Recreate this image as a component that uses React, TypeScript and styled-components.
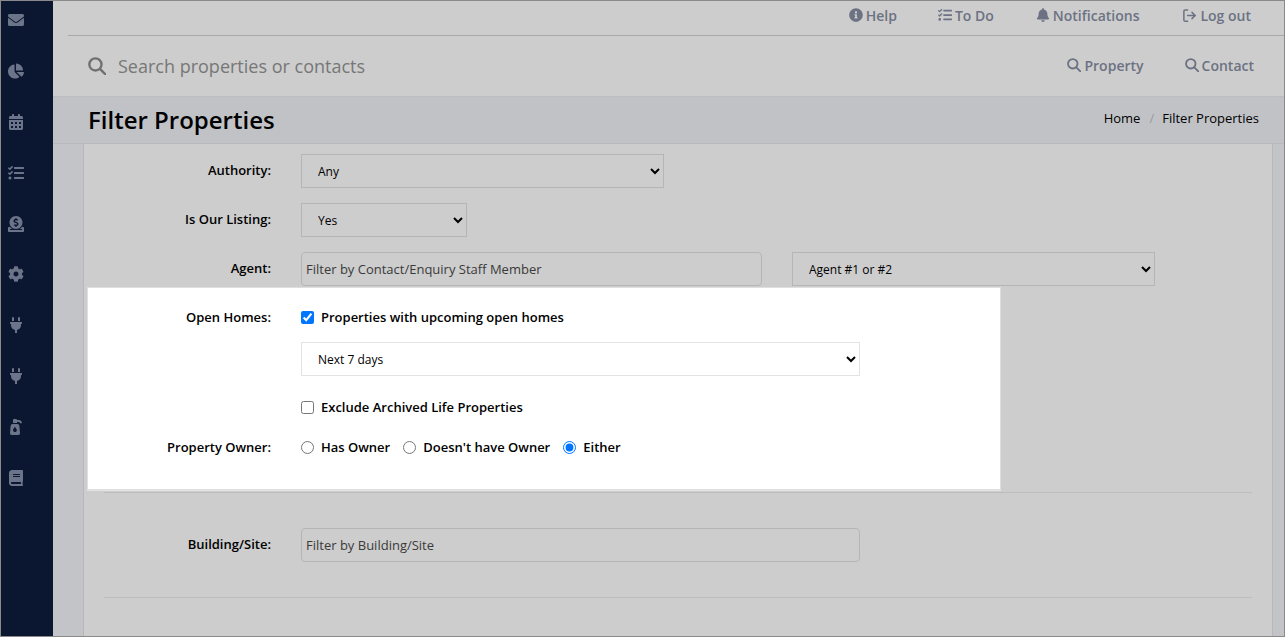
import React from 'react';
import styled, { createGlobalStyle } from 'styled-components';
import {
  FaBell,
  FaBook,
  FaCalendarAlt,
  FaChartPie,
  FaCog,
  FaDonate,
  FaEnvelope,
  FaInfoCircle,
  FaPlug,
  FaPumpSoap,
  FaTasks,
} from 'react-icons/fa';
import { LogOut } from 'lucide-react';

const GlobalStyle = createGlobalStyle`
  html, body {
    margin: 0;
    height: 100%;
    overflow: hidden;
    background: #cdcdcd;
  }
  * { box-sizing: border-box; }
`;

const Frame = styled.div`
  display: flex;
  width: 1285px;
  height: 637px;
  overflow: hidden;
  border: 1px solid #8a8a8a;
  font-family: "Open Sans", sans-serif;
  color: #000;
`;

const Sidebar = styled.nav`
  flex: 0 0 52px;
  display: flex;
  flex-direction: column;
  padding-top: 11px;
  background: #0b1730;
  color: #6b7488;
`;

const SideItem = styled.div`
  height: 50.9px;
  padding-left: 7px;
  font-size: 16px;
  line-height: 18px;
`;

const Main = styled.div`
  flex: 1;
  min-width: 0;
  display: flex;
  flex-direction: column;
`;

const TopBar = styled.div`
  height: 35px;
  margin-left: 15px;
  display: flex;
  justify-content: flex-end;
  align-items: center;
  gap: 42px;
  padding: 0 33px 6px 0;
  border-bottom: 1px solid #a8a8a8;
  background: #cdcdcd;
`;

const TopLink = styled.a<{ $nudge?: number }>`
  display: flex;
  align-items: center;
  gap: 3px;
  margin-left: ${p => p.$nudge ?? 0}px;
  font-size: 14px;
  font-weight: 600;
  color: #6c7283;
`;

const SearchRow = styled.div`
  height: 61px;
  display: flex;
  align-items: center;
  padding: 0 30px 0 35px;
  background: #cdcdcd;
  border-bottom: 1px solid #bdbdbd;
`;

const BigSearch = styled.span`
  display: flex;
  color: #707070;
`;

const SearchHint = styled.span`
  flex: 1;
  margin-left: 12px;
  font-size: 18px;
  color: #777;
`;

const SearchLink = styled.a`
  display: flex;
  align-items: center;
  gap: 3px;
  margin-left: 41px;
  padding-bottom: 2px;
  font-size: 14px;
  font-weight: 600;
  color: #6c7283;
`;

const TitleBand = styled.div`
  height: 47px;
  display: flex;
  align-items: center;
  justify-content: space-between;
  padding: 0 25px 2px 35px;
  background: #c1c2c6;
  border-bottom: 1px solid #b8b9bc;
`;

const PageTitle = styled.h1`
  margin: 0;
  font-size: 24px;
  font-weight: 600;
`;

const Crumbs = styled.div`
  display: flex;
  gap: 8px;
  padding-bottom: 2px;
  font-size: 13px;
`;

const CrumbDivider = styled.span`
  margin-left: 1px;
  color: #9a9a9a;
`;

const Body = styled.div`
  flex: 1;
  min-height: 0;
  padding: 0 11px 0 30px;
  background: #c3c4c8;
`;

const Card = styled.div`
  height: 100%;
  padding-top: 10px;
  background: #cdcdcd;
  border-left: 1px solid #b8b8b8;
  border-right: 1px solid #b8b8b8;
`;

const Row = styled.div<{ $height: number; $pad?: number }>`
  display: flex;
  height: ${p => p.$height}px;
  padding-top: ${p => p.$pad ?? 0}px;
`;

const Label = styled.label`
  flex: 0 0 187px;
  padding-top: 7px;
  text-align: right;
  font-size: 13px;
  line-height: 18px;
  font-weight: 600;
`;

const Field = styled.div`
  margin-left: 30px;
  display: flex;
  gap: 30px;
`;

const Select = styled.select<{ $width: number; $bright?: boolean }>`
  width: ${p => p.$width}px;
  height: 34px;
  padding: 0 12px;
  font-family: "Open Sans", sans-serif;
  font-size: 12px;
  color: #000;
  background: ${p => (p.$bright ? '#fff' : '#cdcdcd')};
  border: 1px solid ${p => (p.$bright ? '#e3e3e3' : '#b5b5b5')};
  border-radius: 0;
`;

const TextInput = styled.input<{ $width: number }>`
  width: ${p => p.$width}px;
  height: 34px;
  padding: 0 4px;
  font-family: "Open Sans", sans-serif;
  font-size: 13px;
  background: #cdcdcd;
  border: 1px solid #b5b5b5;
  border-radius: 4px;
  &::placeholder {
    color: #3a3a3a;
    opacity: 1;
  }
`;

/* the one section that stays lit while the rest of the page is dimmed */
const Spotlight = styled.section`
  position: relative;
  width: 914px;
  height: 203px;
  margin: -1px 0 0 3px;
  padding-top: 20px;
  background: #fff;
  border: 1px solid #dedede;
  box-shadow: 0 1px 0 #e4e4e4;
`;

const SpotRow = styled.div<{ $height: number }>`
  display: flex;
  height: ${p => p.$height}px;
`;

const SpotLabel = styled(Label)`
  flex-basis: 183px;
  padding-top: 0;
`;

const Choice = styled.label`
  display: flex;
  align-items: center;
  height: 18px;
  font-size: 13px;
  font-weight: 600;
`;

const Tick = styled.input`
  width: 13px;
  height: 13px;
  margin: 1px 7px 0 0;
`;

const Choices = styled.div`
  margin-left: 30px;
  display: flex;
  gap: 13px;
`;

const Divider = styled.hr<{ $gap: number }>`
  margin: ${p => p.$gap}px 20px 0 20px;
  border: 0;
  border-top: 1px solid #bdbdbd;
`;

function SearchGlyph({ size }: { size: number }) {
  return (
    <svg width={size} height={size} viewBox="0 0 16 16" fill="none" stroke="currentColor" strokeWidth="2.1">
      <circle cx="6.6" cy="6.6" r="5.4" />
      <line x1="10.6" y1="10.6" x2="15.3" y2="15.3" strokeLinecap="round" />
    </svg>
  );
}

const navIcons = [FaEnvelope, FaChartPie, FaCalendarAlt, FaTasks, FaDonate, FaCog, FaPlug, FaPlug, FaPumpSoap, FaBook];

export default function App() {
  return (
    <>
      <GlobalStyle />
      <Frame>
        <Sidebar>
          {navIcons.map((Icon, i) => (
            <SideItem key={i}><Icon /></SideItem>
          ))}
        </Sidebar>
        <Main>
          <TopBar>
            <TopLink><FaInfoCircle size={14} />Help</TopLink>
            <TopLink $nudge={-1}><FaTasks size={14} />To Do</TopLink>
            <TopLink><FaBell size={14} />Notifications</TopLink>
            <TopLink $nudge={1}><LogOut size={15} strokeWidth={2.4} />Log out</TopLink>
          </TopBar>
          <SearchRow>
            <BigSearch><SearchGlyph size={18} /></BigSearch>
            <SearchHint>Search properties or contacts</SearchHint>
            <SearchLink><SearchGlyph size={14} />Property</SearchLink>
            <SearchLink><SearchGlyph size={14} />Contact</SearchLink>
          </SearchRow>
          <TitleBand>
            <PageTitle>Filter Properties</PageTitle>
            <Crumbs>
              <span>Home</span>
              <CrumbDivider>/</CrumbDivider>
              <span>Filter Properties</span>
            </Crumbs>
          </TitleBand>
          <Body>
            <Card>
              <Row $height={49}>
                <Label>Authority:</Label>
                <Field>
                  <Select $width={363} defaultValue="Any"><option>Any</option></Select>
                </Field>
              </Row>
              <Row $height={49}>
                <Label>Is Our Listing:</Label>
                <Field>
                  <Select $width={166} defaultValue="Yes"><option>Yes</option></Select>
                </Field>
              </Row>
              <Row $height={36}>
                <Label>Agent:</Label>
                <Field>
                  <TextInput $width={461} placeholder="Filter by Contact/Enquiry Staff Member" />
                  <Select $width={363} defaultValue="Agent #1 or #2"><option>Agent #1 or #2</option></Select>
                </Field>
              </Row>
              <Spotlight>
                <SpotRow $height={34}>
                  <SpotLabel>Open Homes:</SpotLabel>
                  <Choices>
                    <Choice><Tick type="checkbox" defaultChecked />Properties with upcoming open homes</Choice>
                  </Choices>
                </SpotRow>
                <SpotRow $height={56}>
                  <SpotLabel />
                  <Field>
                    <Select $width={559} $bright defaultValue="Next 7 days"><option>Next 7 days</option></Select>
                  </Field>
                </SpotRow>
                <SpotRow $height={40}>
                  <SpotLabel />
                  <Choices>
                    <Choice><Tick type="checkbox" />Exclude Archived Life Properties</Choice>
                  </Choices>
                </SpotRow>
                <SpotRow $height={40}>
                  <SpotLabel>Property Owner:</SpotLabel>
                  <Choices>
                    <Choice><Tick type="radio" name="owner" />Has Owner</Choice>
                    <Choice><Tick type="radio" name="owner" />Doesn't have Owner</Choice>
                    <Choice><Tick type="radio" name="owner" defaultChecked />Either</Choice>
                  </Choices>
                </SpotRow>
              </Spotlight>
              <Divider $gap={2} />
              <Row $height={70} $pad={35}>
                <Label>Building/Site:</Label>
                <Field>
                  <TextInput $width={559} placeholder="Filter by Building/Site" />
                </Field>
              </Row>
              <Divider $gap={34} />
            </Card>
          </Body>
        </Main>
      </Frame>
    </>
  );
}
